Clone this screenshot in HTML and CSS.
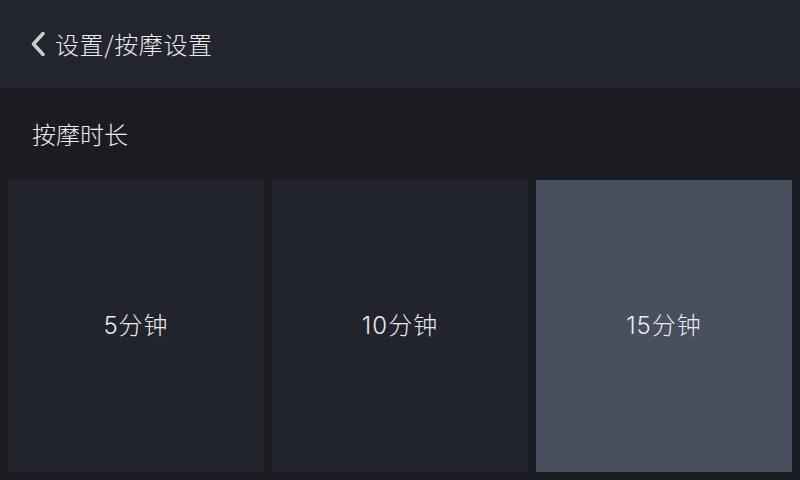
FILE: index.html
```html
<!DOCTYPE html>
<html lang="zh">
<head>
<meta charset="utf-8">
<link rel="stylesheet" href="styles.css">
</head>
<body>
<div class="app">
  <header class="topbar">
    <svg class="back" width="16" height="24" viewBox="0 0 16 24"><polyline points="13,1.5 3.5,12 13,22.5" fill="none" stroke="#c9cacc" stroke-width="3.6" stroke-linecap="round" stroke-linejoin="round"/></svg>
    <span class="title">设置/按摩设置</span>
  </header>
  <div class="section-label">按摩时长</div>
  <div class="options">
    <div class="option">5分钟</div>
    <div class="option">10分钟</div>
    <div class="option selected">15分钟</div>
  </div>
</div>
</body>
</html>
```
FILE: styles.css
```css
html, body {
  margin: 0;
  padding: 0;
  background: #1b1c21;
}
.app {
  width: 800px;
  height: 480px;
  display: flex;
  flex-direction: column;
  font-family: "Noto Sans CJK SC", "Noto Sans", sans-serif;
  font-weight: 300;
  color: #ebecee;
}
.topbar {
  height: 88px;
  background: #22252e;
  display: flex;
  align-items: center;
  padding-left: 30px;
  gap: 9px;
  box-sizing: border-box;
}
.back {
  display: block;
}
.title {
  font-size: 24px;
  line-height: 1;
  letter-spacing: 0.6px;
}
.section-label {
  height: 92px;
  display: flex;
  align-items: center;
  padding-left: 32px;
  font-size: 24px;
  line-height: 1;
}
.options {
  flex: 1;
  display: grid;
  grid-template-columns: repeat(3, 1fr);
  gap: 8px;
  padding: 0 8px 8px;
}
.option {
  background: #21242d;
  display: flex;
  align-items: center;
  justify-content: center;
  font-family: "Inter", "Noto Sans CJK SC", sans-serif;
  font-size: 24px;
  line-height: 1;
  letter-spacing: 1px;
}
.option.selected {
  background: #484f5e;
}
```
